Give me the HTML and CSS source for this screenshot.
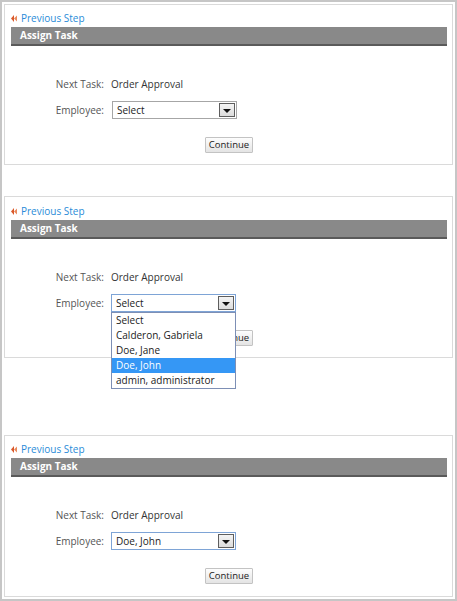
FILE: index.html
```html
<!DOCTYPE html>
<html>
<head>
<meta charset="utf-8">
<link rel="stylesheet" href="styles.css">
</head>
<body>
<div class="frame">

  <div class="panel p1">
    <a class="back" href="#"><svg class="back-icon" width="6" height="7" viewBox="0 0 6 7"><path d="M3 0 L0 3.5 L3 7 Z" fill="#d9582b"/><path d="M6 0.5 L3 3.5 L6 6.5 Z" fill="#e98a5f"/></svg>Previous Step</a>
    <div class="bar">Assign Task</div>
    <div class="form">
      <div class="label">Next Task:</div>
      <div class="value">Order Approval</div>
      <div class="label">Employee:</div>
      <div class="value">
        <div class="select"><span class="sel-text">Select</span><span class="sel-btn"><span class="tri"></span></span></div>
      </div>
    </div>
    <div class="actions"><button class="btn">Continue</button></div>
  </div>

  <div class="panel p2">
    <a class="back" href="#"><svg class="back-icon" width="6" height="7" viewBox="0 0 6 7"><path d="M3 0 L0 3.5 L3 7 Z" fill="#d9582b"/><path d="M6 0.5 L3 3.5 L6 6.5 Z" fill="#e98a5f"/></svg>Previous Step</a>
    <div class="bar">Assign Task</div>
    <div class="form">
      <div class="label">Next Task:</div>
      <div class="value">Order Approval</div>
      <div class="label">Employee:</div>
      <div class="value">
        <div class="select focus"><span class="sel-text">Select</span><span class="sel-btn"><span class="tri"></span></span>
          <ul class="list">
            <li>Select</li>
            <li>Calderon, Gabriela</li>
            <li>Doe, Jane</li>
            <li class="hl">Doe, John</li>
            <li>admin, administrator</li>
          </ul>
        </div>
      </div>
    </div>
    <div class="actions"><button class="btn">Continue</button></div>
  </div>

  <div class="panel p3">
    <a class="back" href="#"><svg class="back-icon" width="6" height="7" viewBox="0 0 6 7"><path d="M3 0 L0 3.5 L3 7 Z" fill="#d9582b"/><path d="M6 0.5 L3 3.5 L6 6.5 Z" fill="#e98a5f"/></svg>Previous Step</a>
    <div class="bar">Assign Task</div>
    <div class="form">
      <div class="label">Next Task:</div>
      <div class="value">Order Approval</div>
      <div class="label">Employee:</div>
      <div class="value">
        <div class="select focus"><span class="sel-text">Doe, John</span><span class="sel-btn"><span class="tri"></span></span></div>
      </div>
    </div>
    <div class="actions"><button class="btn">Continue</button></div>
  </div>

</div>
</body>
</html>
```
FILE: styles.css
```css
* { box-sizing: border-box; }
html, body { margin: 0; padding: 0; background: #fff; }
body {
  font-family: "Open Sans", "Noto Sans", "Liberation Sans", sans-serif;
  font-size: 10px;
  color: #333;
}
.frame {
  width: 457px;
  height: 601px;
  border: 2px solid #c6c6c6;
  padding: 2px;
}
.panel {
  position: relative;
  width: 449px;
  border: 1px solid #dadada;
  padding: 6px 5px 11px 6px;
}
.p2 { margin-top: 31px; padding-top: 7px; }
.p3 { margin-top: 77px; padding-bottom: 12px; }
.back {
  display: flex;
  align-items: center;
  height: 14px;
  color: #2a8bd8;
  text-decoration: none;
  font-size: 10px;
  margin-bottom: 2px;
}
.back-icon { margin-right: 4px; }
.bar {
  height: 19px;
  background: #898989;
  border-bottom: 2px solid #5a5a5a;
  color: #fff;
  font-weight: bold;
  font-size: 10px;
  line-height: 17px;
  padding-left: 9px;
}
.form {
  display: grid;
  grid-template-columns: 93px auto;
  column-gap: 7px;
  row-gap: 9px;
  align-items: center;
  margin-top: 30px;
}
.label {
  text-align: right;
  color: #555;
  font-size: 10px;
  line-height: 16px;
}
.value {
  color: #333;
  font-size: 10px;
  line-height: 16px;
}
.select {
  position: relative;
  width: 125px;
  height: 18px;
  margin-left: 1px;
  border: 1px solid #a6a6a6;
  display: flex;
  align-items: center;
  justify-content: space-between;
  background: #fff;
}
.select.focus { border-color: #7ea4d6; margin-left: 0; }
.sel-text { padding-left: 4px; color: #222; font-size: 10px; }
.sel-btn {
  width: 16px;
  height: 14px;
  margin-right: 1px;
  border: 1px solid #5e5e5e;
  background: linear-gradient(#f4f4f4, #dcdcdc);
  display: flex;
  align-items: center;
  justify-content: center;
}
.tri {
  width: 0;
  height: 0;
  border-left: 4px solid transparent;
  border-right: 4px solid transparent;
  border-top: 4px solid #111;
  margin-top: 1px;
}
.list {
  position: absolute;
  left: -1px;
  top: 17px;
  width: 125px;
  margin: 0;
  padding: 0;
  list-style: none;
  border: 1px solid #7d8fb5;
  background: #fff;
  z-index: 5;
}
.list li {
  height: 15px;
  line-height: 15px;
  padding-left: 4px;
  color: #222;
  font-size: 10px;
}
.list li.hl { background: #3597f5; color: #fff; }
.actions {
  display: flex;
  justify-content: center;
  margin-top: 18px;
}
.btn {
  height: 16px;
  padding: 0 3px;
  border: 1px solid #c3c3c3;
  border-radius: 1px;
  background: linear-gradient(#fdfdfd, #e4e4e4);
  font-family: "Open Sans", "Noto Sans", "Liberation Sans", sans-serif;
  font-size: 9.5px;
  line-height: 14px;
  color: #222;
}
```
